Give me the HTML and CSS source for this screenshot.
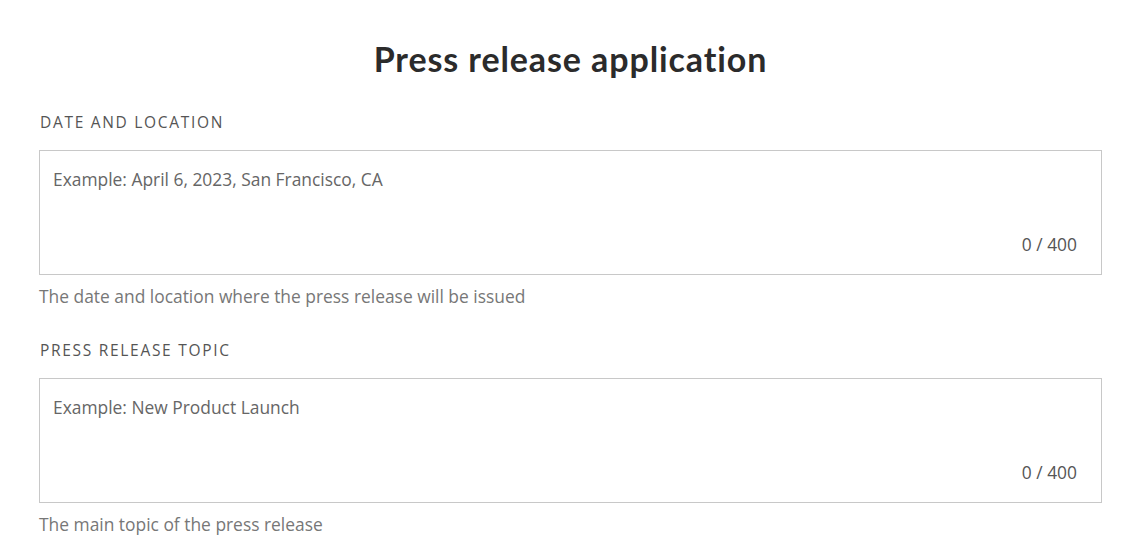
FILE: index.html
```html
<!DOCTYPE html>
<html>
<head>
<meta charset="utf-8">
<link rel="stylesheet" href="styles.css">
</head>
<body>
<main class="page">
  <h1 class="title">Press release application</h1>
  <section class="field">
    <div class="label">DATE AND LOCATION</div>
    <div class="box">
      <div class="placeholder">Example: April 6, 2023, San Francisco, CA</div>
      <div class="counter">0 / 400</div>
    </div>
    <div class="help">The date and location where the press release will be issued</div>
  </section>
  <section class="field">
    <div class="label">PRESS RELEASE TOPIC</div>
    <div class="box">
      <div class="placeholder">Example: New Product Launch</div>
      <div class="counter">0 / 400</div>
    </div>
    <div class="help">The main topic of the press release</div>
  </section>
</main>
</body>
</html>
```
FILE: styles.css
```css
* { box-sizing: border-box; }
body {
  margin: 0;
  background: #fff;
  font-family: "Open Sans", "Liberation Sans", sans-serif;
  color: #333;
}
.page {
  padding: 0 25px 0 39px;
}
.title {
  margin: 0;
  padding-top: 39px;
  text-align: center;
  font-family: "Lato", "Liberation Sans", sans-serif;
  font-weight: 700;
  font-size: 34px;
  line-height: 40px;
  color: #2b2b2b;
  letter-spacing: 0.9px;
}
.field {
  display: flex;
  flex-direction: column;
}
.label {
  margin-top: 33px;
  font-size: 15.5px;
  line-height: 20px;
  letter-spacing: 1.7px;
  color: #555;
  padding-left: 1px;
}
.field + .field .label { margin-top: 31px; }
.box {
  margin-top: 18px;
  height: 125px;
  border: 1px solid #c8c8c8;
  padding: 15px 24px 17px 13px;
  display: flex;
  flex-direction: column;
  justify-content: space-between;
}
.placeholder {
  font-size: 17.4px;
  line-height: 26px;
  color: #666;
}
.counter {
  align-self: flex-end;
  font-size: 17.4px;
  line-height: 26px;
  color: #555;
}
.help {
  margin-top: 8px;
  font-size: 17.4px;
  line-height: 26px;
  color: #777;
}
```
